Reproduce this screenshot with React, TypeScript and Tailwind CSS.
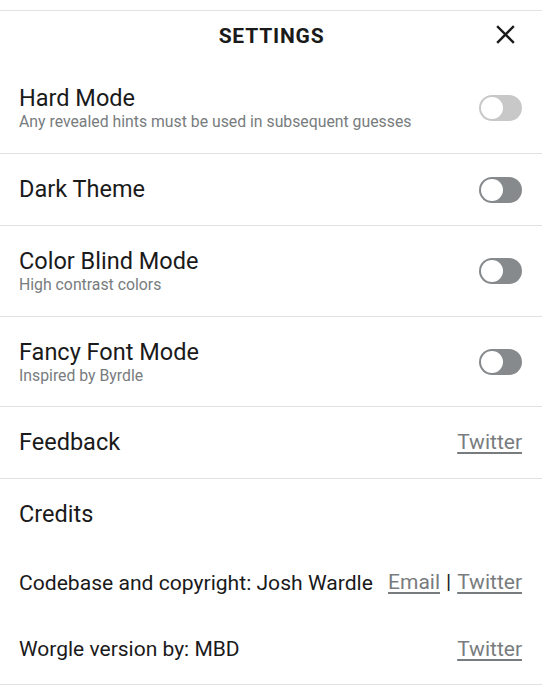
import React from "react";

function Toggle({ light }: { light?: boolean }) {
  return (
    <div
      className={`flex h-[26px] w-[43px] shrink-0 items-center rounded-full px-[2px] ${
        light ? "bg-[#c8c8c8]" : "bg-[#878a8c]"
      }`}
    >
      <div className="h-[22px] w-[22px] rounded-full bg-white" />
    </div>
  );
}

function SettingRow({
  title,
  sub,
  h,
  light,
}: {
  title: string;
  sub?: string;
  h: string;
  light?: boolean;
}) {
  return (
    <div className={`flex items-center justify-between border-b border-[#e1e1e1] pl-[19px] pr-[20px] ${h}`}>
      <div className="flex flex-col">
        <div className="text-[23.5px] leading-[27px] text-[#1a1a1b]">{title}</div>
        {sub && <div className="text-[15.8px] leading-[19px] text-[#787c7e]">{sub}</div>}
      </div>
      <Toggle light={light} />
    </div>
  );
}

export default function App() {
  return (
    <div
      className="w-[542px] h-[700px] bg-white"
      style={{ fontFamily: "Roboto, 'Liberation Sans', sans-serif" }}
    >
      <div className="h-[10px]" />
      <div className="border-t border-[#e1e1e1]">
        <div className="relative flex h-[51px] items-center justify-center">
          <div className="pl-[1px] pt-[1px] text-[21px] font-bold tracking-[0.8px] text-[#1a1a1b]">SETTINGS</div>
          <svg
            className="absolute left-[496px] top-[14px]"
            width="19"
            height="19"
            viewBox="0 0 19 19"
            fill="none"
            stroke="#1a1a1b"
            strokeWidth="2.4"
            strokeLinecap="square"
          >
            <line x1="2" y1="2" x2="17" y2="17" />
            <line x1="17" y1="2" x2="2" y2="17" />
          </svg>
        </div>
        <SettingRow
          title="Hard Mode"
          sub="Any revealed hints must be used in subsequent guesses"
          h="h-[92px]"
          light
        />
        <SettingRow title="Dark Theme" h="h-[72px]" />
        <SettingRow title="Color Blind Mode" sub="High contrast colors" h="h-[91px]" />
        <SettingRow title="Fancy Font Mode" sub="Inspired by Byrdle" h="h-[90px]" />
        <div className="flex h-[72px] items-center justify-between border-b border-[#e1e1e1] pl-[19px] pr-[20px]">
          <div className="text-[23.5px] leading-[27px] text-[#1a1a1b]">Feedback</div>
          <a className="text-[21px] text-[#787c7e] underline underline-offset-[3px]">Twitter</a>
        </div>
        <div className="flex flex-col border-b border-[#e1e1e1] pl-[19px] pr-[20px]">
          <div className="flex h-[71px] items-center">
            <div className="text-[23.5px] leading-[27px] text-[#1a1a1b]">Credits</div>
          </div>
          <div className="flex h-[66px] items-center justify-between">
            <div className="text-[21.1px] text-[#1a1a1b]">Codebase and copyright: Josh Wardle</div>
            <div className="flex items-center gap-[6px] text-[21px]">
              <a className="text-[#787c7e] underline underline-offset-[3px]">Email</a>
              <span className="text-[#1a1a1b]">|</span>
              <a className="text-[#787c7e] underline underline-offset-[3px]">Twitter</a>
            </div>
          </div>
          <div className="flex h-[68px] items-center justify-between">
            <div className="text-[21px] text-[#1a1a1b]">Worgle version by: MBD</div>
            <a className="text-[21px] text-[#787c7e] underline underline-offset-[3px]">Twitter</a>
          </div>
        </div>
      </div>
    </div>
  );
}
